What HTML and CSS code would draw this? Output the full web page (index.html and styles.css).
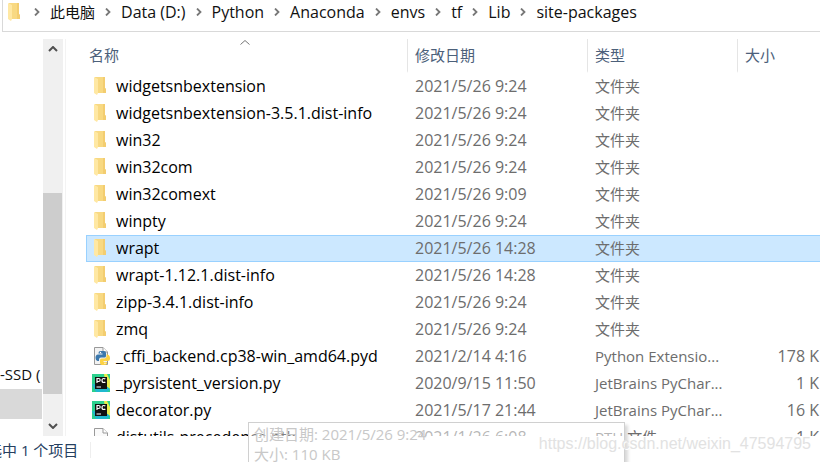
FILE: index.html
```html
<!DOCTYPE html>
<html lang="zh-CN">

<head>
    <meta charset="UTF-8">
    <meta name="viewport" content="width=device-width, initial-scale=1.0">
    <title>site-packages</title>
    <link rel="stylesheet" href="styles.css">
</head>

<body>
    <!-- 图标 -->
    <svg class="sprite" aria-hidden="true">
        <symbol id="folder" viewBox="0 0 12 18">
            <path d="M1 0H11V11L12 12V16H2Z" fill="#f8d982" />
            <path d="M9 0H11V11L12 12V16H9Z" fill="#f3cd70" />
            <path d="M0 0L4 2V16L3 18L0 16Z" fill="#ffe8a3" />
        </symbol>
        <symbol id="pyd" viewBox="0 0 18 18">
            <path d="M2.5 .5H11L15.5 5V17.5H2.5Z" fill="#f2f2f2" stroke="#999" />
            <path d="M11 .5V5H15.5" fill="#fff" stroke="#999" />
            <path d="M8.500 4H12Q14 4 14 6V9Q14 10.500 12.500 10.500H9Q7 10.500 7 12.500V14H5.500Q3.500 13.500 3.500 11Q3.500 7.500 6 7.500H10.500V6.500H6.500V6Q6.500 4 8.500 4Z" fill="#3b78ad" />
            <path d="M14.500 7.500H15.500Q18 8 18 11.500Q18 14 15.500 14H11.500V15H15V16Q15 18 13 18H10Q8 18 8 16V13Q8 11.500 9.500 11.500H12.500Q14.500 11.500 14.500 9.500Z" fill="#fcd243" />
            <circle cx="8.500" cy="5.500" r=".7" fill="#fff" />
            <circle cx="13" cy="16.300" r=".7" fill="#fff" />
        </symbol>
        <symbol id="pycharm" viewBox="0 0 18 18">
            <path d="M0 0H18V18H0Z" fill="#2bd08d" />
            <path d="M12 0H15L18 6V15L14 12Z" fill="#e8ed4d" />
            <path d="M0 10L4 18H15L18 15L14 12Z" fill="#1fb9cf" />
            <path d="M3 3H15V15H3Z" fill="#111" />
            <path d="M5 9V4.500H6.500Q8.200 4.500 8.200 6T6.500 7.500H5M13.300 5.200Q12.800 4.500 11.800 4.500Q10 4.500 10 6.500T11.800 8.500Q12.800 8.500 13.300 7.800M4.500 13H9" fill="none" stroke="#fff" stroke-width="1.200" />
        </symbol>
        <symbol id="file" viewBox="0 0 18 18">
            <path d="M2.500 .5H11L15.500 5V17.500H2.500Z" fill="#fafafa" stroke="#999" />
            <path d="M11 .5V5H15.500" fill="#fff" stroke="#999" />
        </symbol>
        <symbol id="chevron" viewBox="0 0 6 8">
            <path d="M1 .5L4.500 4L1 7.500" fill="none" stroke="#777" stroke-width="1.800" />
        </symbol>
    </svg>

    <div class="explorer">
        <nav class="address">
            <svg class="folder"><use href="#folder" /></svg>
            <svg class="chevron"><use href="#chevron" /></svg>
            <a href="#" class="cn">此电脑</a>
            <svg class="chevron"><use href="#chevron" /></svg>
            <a href="#">Data (D:)</a>
            <svg class="chevron"><use href="#chevron" /></svg>
            <a href="#">Python</a>
            <svg class="chevron"><use href="#chevron" /></svg>
            <a href="#">Anaconda</a>
            <svg class="chevron"><use href="#chevron" /></svg>
            <a href="#">envs</a>
            <svg class="chevron"><use href="#chevron" /></svg>
            <a href="#">tf</a>
            <svg class="chevron"><use href="#chevron" /></svg>
            <a href="#">Lib</a>
            <svg class="chevron"><use href="#chevron" /></svg>
            <a href="#">site-packages</a>
        </nav>

        <div class="main">
            <aside class="tree">
                <a href="#">-SSD (</a>
                <div class="current"></div>
            </aside>

            <div class="scrollbar">
                <button type="button" aria-label="向上滚动">
                    <svg viewBox="0 0 10 6"><path d="M1 5L5 1L9 5" /></svg>
                </button>
                <div class="track">
                    <div class="thumb"></div>
                </div>
                <button type="button" aria-label="向下滚动">
                    <svg viewBox="0 0 10 6"><path d="M1 1L5 5L9 1" /></svg>
                </button>
            </div>

            <div class="files">
                <table>
                    <thead>
                        <tr>
                            <th class="name">名称<svg class="sort" viewBox="0 0 10 5"><path d="M.5 4.500L5 .5L9.500 4.500" /></svg></th>
                            <th class="date">修改日期</th>
                            <th class="type">类型</th>
                            <th class="size">大小</th>
                        </tr>
                    </thead>
                    <tbody>
                        <tr>
                            <td><svg class="folder"><use href="#folder" /></svg>widgetsnbextension</td>
                            <td>2021/5/26 9:24</td>
                            <td>文件夹</td>
                            <td></td>
                        </tr>
                        <tr>
                            <td><svg class="folder"><use href="#folder" /></svg>widgetsnbextension-3.5.1.dist-info</td>
                            <td>2021/5/26 9:24</td>
                            <td>文件夹</td>
                            <td></td>
                        </tr>
                        <tr>
                            <td><svg class="folder"><use href="#folder" /></svg>win32</td>
                            <td>2021/5/26 9:24</td>
                            <td>文件夹</td>
                            <td></td>
                        </tr>
                        <tr>
                            <td><svg class="folder"><use href="#folder" /></svg>win32com</td>
                            <td>2021/5/26 9:24</td>
                            <td>文件夹</td>
                            <td></td>
                        </tr>
                        <tr>
                            <td><svg class="folder"><use href="#folder" /></svg>win32comext</td>
                            <td>2021/5/26 9:09</td>
                            <td>文件夹</td>
                            <td></td>
                        </tr>
                        <tr>
                            <td><svg class="folder"><use href="#folder" /></svg>winpty</td>
                            <td>2021/5/26 9:24</td>
                            <td>文件夹</td>
                            <td></td>
                        </tr>
                        <tr class="selected">
                            <td><svg class="folder"><use href="#folder" /></svg>wrapt</td>
                            <td>2021/5/26 14:28</td>
                            <td>文件夹</td>
                            <td></td>
                        </tr>
                        <tr>
                            <td><svg class="folder"><use href="#folder" /></svg>wrapt-1.12.1.dist-info</td>
                            <td>2021/5/26 14:28</td>
                            <td>文件夹</td>
                            <td></td>
                        </tr>
                        <tr>
                            <td><svg class="folder"><use href="#folder" /></svg>zipp-3.4.1.dist-info</td>
                            <td>2021/5/26 9:24</td>
                            <td>文件夹</td>
                            <td></td>
                        </tr>
                        <tr>
                            <td><svg class="folder"><use href="#folder" /></svg>zmq</td>
                            <td>2021/5/26 9:24</td>
                            <td>文件夹</td>
                            <td></td>
                        </tr>
                        <tr>
                            <td><svg class="icon"><use href="#pyd" /></svg>_cffi_backend.cp38-win_amd64.pyd</td>
                            <td>2021/2/14 4:16</td>
                            <td>Python Extensio...</td>
                            <td>178 K</td>
                        </tr>
                        <tr>
                            <td><svg class="icon"><use href="#pycharm" /></svg>_pyrsistent_version.py</td>
                            <td>2020/9/15 11:50</td>
                            <td>JetBrains PyChar...</td>
                            <td>1 K</td>
                        </tr>
                        <tr>
                            <td><svg class="icon"><use href="#pycharm" /></svg>decorator.py</td>
                            <td>2021/5/17 21:44</td>
                            <td>JetBrains PyChar...</td>
                            <td>16 K</td>
                        </tr>
                        <tr>
                            <td><svg class="icon"><use href="#file" /></svg>distutils-precedence.pth</td>
                            <td>2021/1/26 6:08</td>
                            <td>PTH 文件</td>
                            <td>1 K</td>
                        </tr>
                    </tbody>
                </table>
            </div>
        </div>

        <footer class="status">
            <span>选中 1 个项目</span>
        </footer>

        <div class="tooltip">
            <div>创建日期: 2021/5/26 9:24</div>
            <div>大小: 110 KB</div>
        </div>
        <div class="watermark">https://blog.csdn.net/weixin_47594795</div>
    </div>
</body>

</html>
```
FILE: styles.css
```css
* {
    box-sizing: border-box;
}
body {
    margin: 0;
    background: #fff;
    color: #111;
    font-family: "Open Sans", "Noto Sans CJK SC", sans-serif;
    font-size: 15px;
    line-height: 20px;
}
a {
    color: inherit;
    text-decoration: none;
}
.sprite {
    display: none;
}
.explorer {
    position: relative;
    display: flex;
    flex-direction: column;
    height: 100vh;
    overflow: hidden;
}

/* 地址栏 */
.address {
    display: flex;
    align-items: center;
    flex: none;
    height: 32px;
    margin-left: 2px;
    padding: 0 0 8px 5px;
    border-left: 1px solid #d9d9d9;
    border-bottom: 1px solid #d9d9d9;
    font-size: 16px;
    white-space: nowrap;
}
.address .cn {
    font-size: 15px;
}
.folder {
    width: 12px;
    height: 18px;
    flex: none;
}
.chevron {
    width: 6px;
    height: 8px;
    margin: 0 10px;
    flex: none;
}
.address .folder + .chevron {
    margin-left: 14px;
}

.main {
    display: flex;
    flex: 1;
    min-height: 0;
    margin-top: 7px;
}

/* 左侧导航 */
.tree {
    display: flex;
    flex-direction: column;
    justify-content: flex-end;
    width: 42px;
    padding-bottom: 17px;
    overflow: hidden;
    white-space: nowrap;
}
.tree a {
    line-height: 30px;
}
.tree .current {
    height: 30px;
    background: #d9d9d9;
}

.scrollbar {
    display: flex;
    flex-direction: column;
    width: 20px;
    margin-left: 1px;
    background: #f0f0f0;
}
.scrollbar button {
    display: flex;
    align-items: center;
    justify-content: center;
    height: 20px;
    padding: 0;
    border: none;
    background: none;
}
.scrollbar svg {
    width: 10px;
    height: 6px;
    fill: none;
    stroke: #505050;
    stroke-width: 2;
}
.track {
    display: flex;
    flex-direction: column;
    justify-content: flex-end;
    flex: 1;
    padding: 0 1px 22px 0;
}
.thumb {
    height: 60%;
    background: #cdcdcd;
}

/* 文件列表 */
.files {
    flex: 1;
    min-width: 0;
    margin-left: 2px;
    padding-left: 20px;
    border-left: 1px solid #f3f3f3;
    overflow: hidden;
}
table {
    width: 100%;
    table-layout: fixed;
    border-collapse: separate;
    border-spacing: 0;
    white-space: nowrap;
}
th {
    position: relative;
    height: 34px;
    padding: 0 0 0 7px;
    border-left: 1px solid #e5e5e5;
    border-bottom: 2px solid #fff;
    color: #4c607a;
    font-weight: normal;
    text-align: left;
}
th.name {
    width: 321px;
    padding-left: 2px;
    border-left-color: transparent;
}
th.date {
    width: 180px;
}
th.type {
    width: 150px;
}
.sort {
    position: absolute;
    top: 1px;
    left: 50%;
    width: 10px;
    height: 5px;
    margin-left: -7px;
    fill: none;
    stroke: #777;
}
td {
    height: 27px;
    padding: 0 0 2px 8px;
    border: solid transparent;
    border-width: 1px 0;
    color: #6d6d6d;
    font-size: 16px;
}
td:first-child {
    display: flex;
    align-items: center;
    padding-left: 8px;
    color: #000;
}
td:nth-child(3) {
    font-size: 15px;
}
td:last-child {
    padding: 0 1px 2px 0;
    text-align: right;
}
td .folder {
    margin-right: 10px;
}
.icon {
    width: 18px;
    height: 18px;
    margin: 0 6px 0 -2px;
    flex: none;
}
.selected td {
    border-color: #99d1ff;
    background: #cce8ff;
}
.selected td:first-child {
    padding-left: 7px;
    border-left-width: 1px;
}

/* 状态栏 */
.status {
    display: flex;
    align-items: center;
    flex: none;
    height: 26px;
    padding-top: 2px;
    color: #26405f;
}
.status span {
    margin-left: -13px;
    padding-right: 12px;
    border-right: 1px solid #eee;
    line-height: 16px;
}

.tooltip {
    position: absolute;
    left: 248px;
    bottom: -6px;
    width: 377px;
    height: 46px;
    padding: 1px 5px;
    border: 1px solid #d0d0d0;
    background: rgba(255, 255, 255, 0.5);
    box-shadow: 3px 3px 3px rgba(0, 0, 0, 0.15);
    color: #c8c8c8;
}
.watermark {
    position: absolute;
    right: 9px;
    bottom: 8px;
    color: #e2e2e2;
    font-family: "Liberation Sans", sans-serif;
    font-size: 16px;
    text-shadow: 1px 1px 0 #fff;
}
```
